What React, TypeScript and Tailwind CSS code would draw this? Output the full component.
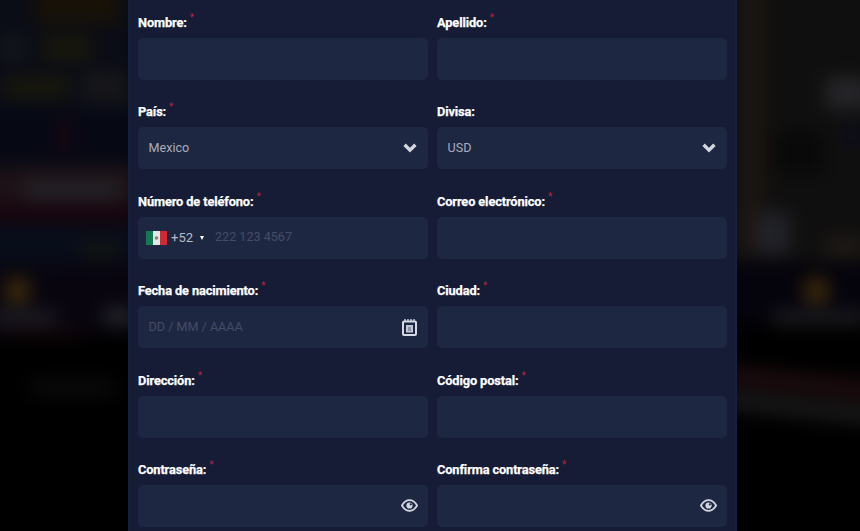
import React from "react";

const Blob = ({ c }: { c: string }) => <div className={`absolute ${c}`} />;

const Chevron = () => (
  <svg width="14" height="10" viewBox="0 0 14 10" className="shrink-0 -mt-[1px]">
    <path d="M1.6 1.8 L7 7.2 L12.4 1.8" fill="none" stroke="#d3d6e0" strokeWidth="3.4" />
  </svg>
);

const Eye = () => (
  <svg width="17" height="13" viewBox="0 0 17 13" className="shrink-0 mr-[-1px]">
    <path d="M0.9 6.5 C3 2.8 5.6 1.2 8.5 1.2 C11.4 1.2 14 2.8 16.1 6.5 C14 10.2 11.4 11.8 8.5 11.8 C5.6 11.8 3 10.2 0.9 6.5 Z" fill="none" stroke="#d3d6e0" strokeWidth="1.8" />
    <circle cx="8.5" cy="6.5" r="3.1" fill="#d3d6e0" />
    <circle cx="9.8" cy="5.3" r="1.1" fill="#1e2742" />
  </svg>
);

const Calendar = () => (
  <svg width="15" height="17" viewBox="0 0 15 17" className="shrink-0">
    <path d="M3 0V3M6 0V3M9 0V3M12 0V3" stroke="#d8dae3" strokeWidth="1.3" />
    <rect x="1" y="2.4" width="13" height="13.6" rx="1" fill="none" stroke="#d8dae3" strokeWidth="2" />
    <rect x="4" y="6" width="7" height="7.5" fill="#c4c7d3" />
    <rect x="6" y="8" width="3" height="4" fill="#8c91a4" />
  </svg>
);

const Flag = () => (
  <svg width="21" height="14" viewBox="0 0 21 14" className="shrink-0">
    <rect width="7" height="14" fill="#127a52" />
    <rect x="7" width="7" height="14" fill="#e6e6e6" />
    <rect x="14" width="7" height="14" fill="#cf2b37" />
    <circle cx="10.5" cy="7" r="1.8" fill="#9a7a6a" />
  </svg>
);

const Field = ({ label, req = true, children }: { label: string; req?: boolean; children?: React.ReactNode }) => (
  <div className="flex flex-col">
    <div className="h-[20px] flex items-start text-[12.8px] font-bold leading-[20.4px] text-white tracking-[-0.12px] [-webkit-text-stroke:0.25px_#ffffff]">
      <span>{label}</span>
      {req && <span className="ml-[3px] -mt-[5px] text-[10px] font-normal text-[#b0283f] [-webkit-text-stroke:0]">*</span>}
    </div>
    <div className="mt-[5px] h-[42px] rounded-[5px] bg-[#1e2742] flex items-center pl-[10.5px] pr-[11px] text-[12.6px] overflow-hidden">
      {children}
    </div>
  </div>
);

export default function App() {
  return (
    <div className="relative w-[860px] h-[531px] overflow-hidden bg-black" style={{ fontFamily: "Roboto, 'Liberation Sans', sans-serif" }}>
      <div className="absolute inset-0 overflow-hidden">
        <div className="absolute inset-0 blur-[9px]">
          <Blob c="-left-[30px] -top-[30px] w-[170px] h-[140px] bg-[#0a0c16]" />
          <Blob c="-left-[30px] top-[110px] w-[170px] h-[55px] bg-[#060814]" />
          <Blob c="-left-[30px] top-[165px] w-[170px] h-[40px] bg-[#1c1116]" />
          <Blob c="-left-[30px] top-[205px] w-[170px] h-[18px] bg-[#17030c]" />
          <Blob c="-left-[30px] top-[223px] w-[170px] h-[40px] bg-[#080d1a]" />
          <Blob c="-left-[30px] top-[263px] w-[170px] h-[70px] bg-[#08050f]" />
          <Blob c="left-[35px] -top-[20px] w-[85px] h-[45px] bg-[#171108]" />
          <Blob c="left-[42px] top-[36px] w-[50px] h-[24px] bg-[#18170b]" />
          <Blob c="left-0 top-[36px] w-[26px] h-[24px] bg-[#15161c]" />
          <Blob c="left-[4px] top-[76px] w-[65px] h-[22px] bg-[#18170b]" />
          <Blob c="left-[82px] top-[72px] w-[46px] h-[30px] bg-[#171719]" />
          <Blob c="left-[58px] top-[120px] w-[12px] h-[30px] bg-[#1d0912]" />
          <Blob c="left-[25px] top-[180px] w-[95px] h-[20px] bg-[#242227]" />
          <Blob c="left-[82px] top-[244px] w-[36px] h-[12px] bg-[#15170c]" />
          <Blob c="left-[4px] top-[277px] w-[27px] h-[27px] rounded-full bg-[#3c2a0a]" />
          <Blob c="-left-[10px] top-[311px] w-[66px] h-[13px] bg-[#201f26]" />
          <Blob c="left-[104px] top-[309px] w-[30px] h-[15px] bg-[#29282d]" />
          <Blob c="left-[0px] top-[330px] w-[85px] h-[6px] bg-[#1a070d]" />
          <Blob c="left-[30px] top-[380px] w-[85px] h-[14px] bg-[#0c0c0c]" />

          <Blob c="left-[725px] -top-[30px] w-[170px] h-[292px] bg-[#100f0f]" />
          <Blob c="left-[725px] top-[262px] w-[170px] h-[62px] bg-[#05030c]" />
          <Blob c="left-[737px] -top-[30px] w-[26px] h-[285px] bg-[#1b1610]" />
          <Blob c="left-[775px] top-[130px] w-[50px] h-[45px] bg-[#0a0909]" />
          <Blob c="left-[826px] top-[78px] w-[44px] h-[30px] bg-[#26262a]" />
          <Blob c="left-[842px] top-[125px] w-[20px] h-[22px] bg-[#0a0e1b]" />
          <Blob c="left-[756px] top-[212px] w-[34px] h-[42px] bg-[#212229]" />
          <Blob c="left-[825px] top-[238px] w-[40px] h-[20px] bg-[#1f1a15]" />
          <Blob c="left-[803px] top-[277px] w-[27px] h-[27px] rounded-full bg-[#3c2a0a]" />
          <Blob c="left-[772px] top-[311px] w-[95px] h-[13px] bg-[#1e1e23]" />
          <Blob c="left-[725px] top-[374px] w-[170px] h-[20px] bg-[#1c0c0e] rotate-[6deg]" />
          <Blob c="left-[725px] top-[400px] w-[170px] h-[18px] bg-[#191919] rotate-[6deg]" />
        </div>
      </div>

      <main className="relative ml-[128px] w-[609px] h-[531px] bg-[#161c35] border-x-[2px] border-[#16203f] px-[8px] pt-[13px]">
        <div className="grid grid-cols-[290px_290px] gap-x-[9px] gap-y-[22.4px]">
          <Field label="Nombre:" />
          <Field label="Apellido:" />
          <Field label="País:">
            <span className="flex-1 text-[#a9adbd]">Mexico</span>
            <Chevron />
          </Field>
          <Field label="Divisa:" req={false}>
            <span className="flex-1 text-[#a9adbd]">USD</span>
            <Chevron />
          </Field>
          <Field label="Número de teléfono:">
            <div className="flex items-center -ml-[2.5px] gap-[4px]">
              <Flag />
              <span className="text-[#b6b9c6] text-[13px]">+52</span>
              <span className="ml-[3px] w-0 h-0 border-x-[2.5px] border-x-transparent border-t-[4px] border-t-white" />
            </div>
            <span className="ml-[11px] text-[#454c66]">222 123 4567</span>
          </Field>
          <Field label="Correo electrónico:" />
          <Field label="Fecha de nacimiento:">
            <span className="flex-1 text-[#454c66]">DD / MM / AAAA</span>
            <Calendar />
          </Field>
          <Field label="Ciudad:" />
          <Field label="Dirección:" />
          <Field label="Código postal:" />
          <Field label="Contraseña:">
            <span className="flex-1" />
            <Eye />
          </Field>
          <Field label="Confirma contraseña:">
            <span className="flex-1" />
            <Eye />
          </Field>
        </div>
      </main>
    </div>
  );
}
